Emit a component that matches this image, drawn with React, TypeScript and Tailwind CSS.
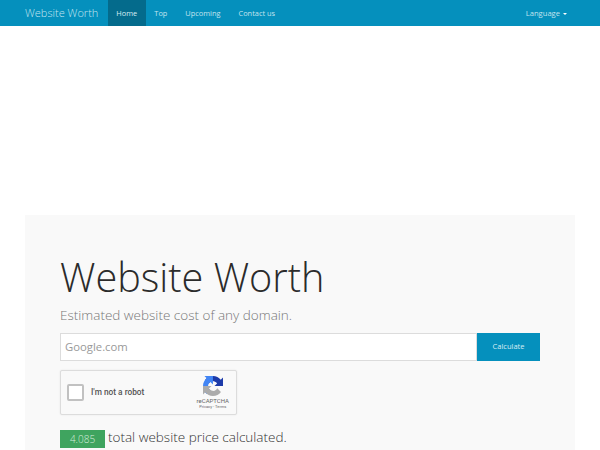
const navLinks = ["Top", "Upcoming", "Contact us"];

function RecaptchaLogo() {
  return (
    <svg width="20" height="20" viewBox="0 0 64 64" className="block">
      <path d="M64 31.955l-.033-1.37V4.687l-7.16 7.16C50.948 4.674 42.033.093 32.05.093c-10.4 0-19.622 4.96-25.458 12.64l11.736 11.86a15.55 15.55 0 0 1 4.754-5.334c2.05-1.6 4.952-2.906 8.968-2.906.485 0 .86.057 1.135.163 4.976.393 9.29 3.14 11.83 7.124l-8.307 8.307c10.522-.04 22.4-.066 27.295.003" fill="#1c3aa9" />
      <path d="M31.862.001l-1.37.033H4.594l7.16 7.16C4.58 13.05 0 21.965 0 31.947c0 10.4 4.96 19.622 12.64 25.458L24.5 45.67a15.55 15.55 0 0 1-5.334-4.754c-1.6-2.05-2.906-4.952-2.906-8.968 0-.485.057-.86.163-1.135.393-4.976 3.14-9.29 7.124-11.83l8.307 8.307c-.04-10.522-.066-22.4.003-27.295" fill="#4285f4" />
      <path d="M.001 31.95l.033 1.37v25.898l7.16-7.16c5.86 7.173 14.774 11.754 24.757 11.754 10.4 0 19.622-4.96 25.458-12.64L45.673 39.4a15.55 15.55 0 0 1-4.754 5.334c-2.05 1.6-4.952 2.906-8.968 2.906-.485 0-.86-.057-1.135-.163-4.976-.393-9.29-3.14-11.83-7.124l8.307-8.307c-10.522.04-22.4.066-27.295-.003" fill="#ababab" />
    </svg>
  );
}

export default function App() {
  return (
    <div className="h-[450px] overflow-hidden bg-white font-['Open_Sans',sans-serif]">
      <nav className="flex h-[26px] items-stretch bg-[#0590bd] pl-[25px] pr-[33px] text-[7.400px] text-[#c3e4ef]">
        <a className="flex items-center pr-[10px] text-[11px] font-light">Website Worth</a>
        <a className="flex w-[38px] items-center justify-center bg-[#046b8c] pt-px pr-px text-[#d7edf4]">Home</a>
        <div className="-ml-px flex items-center pt-px">
          {navLinks.map((link) => (
            <a key={link} className="px-[9px]">{link}</a>
          ))}
        </div>
        <div className="ml-auto flex items-center gap-[3px] pt-px">
          <span className="text-[7.600px]">Language</span>
          <span className="mt-px h-0 w-0 border-x-[2.500px] border-t-[2.500px] border-x-transparent border-t-white" />
        </div>
      </nav>
      <div className="h-[189px]" />
      <main className="mx-[25px] h-[300px] bg-[#f9f9f9] px-[35px] pt-[37px]">
        <h1 className="text-[39.700px] leading-[50px] font-light text-[#2b2b2b]">Website Worth</h1>
        <p className="mt-[3px] text-[13.500px] leading-[20px] font-light text-[#777777]">Estimated website cost of any domain.</p>
        <form className="mt-[8px] flex h-[28px]">
          <div className="flex flex-1 items-center border border-[#dcdcdc] bg-white px-[4px] text-[11.300px] text-[#999999]">Google.com</div>
          <button type="button" className="w-[63px] bg-[#0590bd] text-[7.500px] text-[#d7edf4]">Calculate</button>
        </form>
        <div className="mt-[9px] flex h-[45px] w-[177px] items-center rounded-[2px] border border-[#dcdcdc] bg-[#f9f9f9] pr-[7px] pl-[6px] shadow-[0_0_2px_rgba(0,0,0,0.08)]">
          <span className="-mt-px h-[17px] w-[17px] rounded-[2px] border-2 border-[#c1c1c1] bg-white" />
          <span className="ml-[7px] font-['Roboto',sans-serif] text-[8.300px] font-medium text-[#555555]">I'm not a robot</span>
          <div className="ml-auto flex flex-col items-center pt-px font-['Roboto',sans-serif] text-[#666666]">
            <RecaptchaLogo />
            <span className="mt-px text-[6px] leading-[7px]">reCAPTCHA</span>
            <span className="text-[4px] leading-[6px]">Privacy - Terms</span>
          </div>
        </div>
        <div className="mt-[15px] flex items-start gap-[3px]">
          <span className="flex h-[18px] w-[45px] items-center justify-center bg-[#3fa45f] text-[10px] font-light text-[#d5ecdc]">4.085</span>
          <p className="-mt-[2px] text-[13.500px] leading-[18px] font-light text-[#333333]">total website price calculated.</p>
        </div>
      </main>
    </div>
  );
}
